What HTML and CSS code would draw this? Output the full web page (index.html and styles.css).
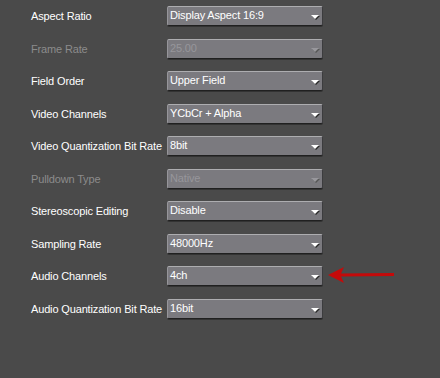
FILE: index.html
```html
<!DOCTYPE html>
<html lang="en">
<head>
<meta charset="UTF-8" />
<title>Project Settings</title>
<link rel="stylesheet" href="styles.css">
</head>
<body>
  <div class="settings">
    <div class="row">
      <span class="label">Aspect Ratio</span>
      <div class="combo"><span>Display Aspect 16:9</span><i class="caret"></i></div>
    </div>
    <div class="row off">
      <span class="label">Frame Rate</span>
      <div class="combo"><span>25.00</span><i class="caret"></i></div>
    </div>
    <div class="row">
      <span class="label">Field Order</span>
      <div class="combo"><span>Upper Field</span><i class="caret"></i></div>
    </div>
    <div class="row">
      <span class="label">Video Channels</span>
      <div class="combo"><span>YCbCr + Alpha</span><i class="caret"></i></div>
    </div>
    <div class="row">
      <span class="label">Video Quantization Bit Rate</span>
      <div class="combo"><span>8bit</span><i class="caret"></i></div>
    </div>
    <div class="row off">
      <span class="label">Pulldown Type</span>
      <div class="combo"><span>Native</span><i class="caret"></i></div>
    </div>
    <div class="row">
      <span class="label">Stereoscopic Editing</span>
      <div class="combo"><span>Disable</span><i class="caret"></i></div>
    </div>
    <div class="row">
      <span class="label">Sampling Rate</span>
      <div class="combo"><span>48000Hz</span><i class="caret"></i></div>
    </div>
    <div class="row marked">
      <span class="label">Audio Channels</span>
      <div class="combo"><span>4ch</span><i class="caret"></i></div>
      <!-- annotation arrow -->
      <svg class="pointer" width="68" height="16" viewBox="0 0 68 16">
        <polygon points="0,8 16,0 13,6.5 66,6 66,9 13,9.5 16,16" fill="#c40a0a"/>
      </svg>
    </div>
    <div class="row">
      <span class="label">Audio Quantization Bit Rate</span>
      <div class="combo"><span>16bit</span><i class="caret"></i></div>
    </div>
  </div>
</body>
</html>
```

FILE: styles.css
```css
* {
  margin: 0; padding: 0; box-sizing: border-box;
}
html, body {
  height: 100%;
}
body {
  background: #4a4a4a;
  font-family: "Liberation Sans", Arial, sans-serif;
  font-size: 11px;
  letter-spacing: -0.15px;
  color: #fff;
}
.settings {
  display: grid;
  grid-auto-rows: 32.5px;
  padding: 6px 0 0 31px;
}
.row {
  position: relative;
  display: grid;
  grid-template-columns: 136px 156px;
  align-items: start;
}
.label {
  line-height: 20px;
  white-space: nowrap;
}

/* Combo boxes */
.combo {
  position: relative;
  height: 20px;
  background: #7b7a7f;
  border-top: 1px solid #adadb0;
  border-left: 1px solid #96959a;
  border-right: 1px solid #3c3c3e;
  border-bottom: 1px solid #202020;
  border-radius: 2px;
  box-shadow: 0 1px 0 #333;
  padding-left: 2px;
  line-height: 17px;
}
.caret {
  position: absolute;
  right: 3px;
  top: 8px;
  width: 0;
  height: 0;
  border-left: 4px solid transparent;
  border-right: 4px solid transparent;
  border-top: 4px solid #fff;
  filter: drop-shadow(1px 1px 0 #2a2a2a);
}

/* Disabled rows */
.off .label { color: #8c8c8c; }
.off .combo { color: #97969b; }
.off .caret { border-top-color: #98979c; filter: drop-shadow(1px 1px 0 #555); }

/* Red annotation */
.pointer {
  position: absolute;
  left: 297px;
  top: 1px;
}
```
